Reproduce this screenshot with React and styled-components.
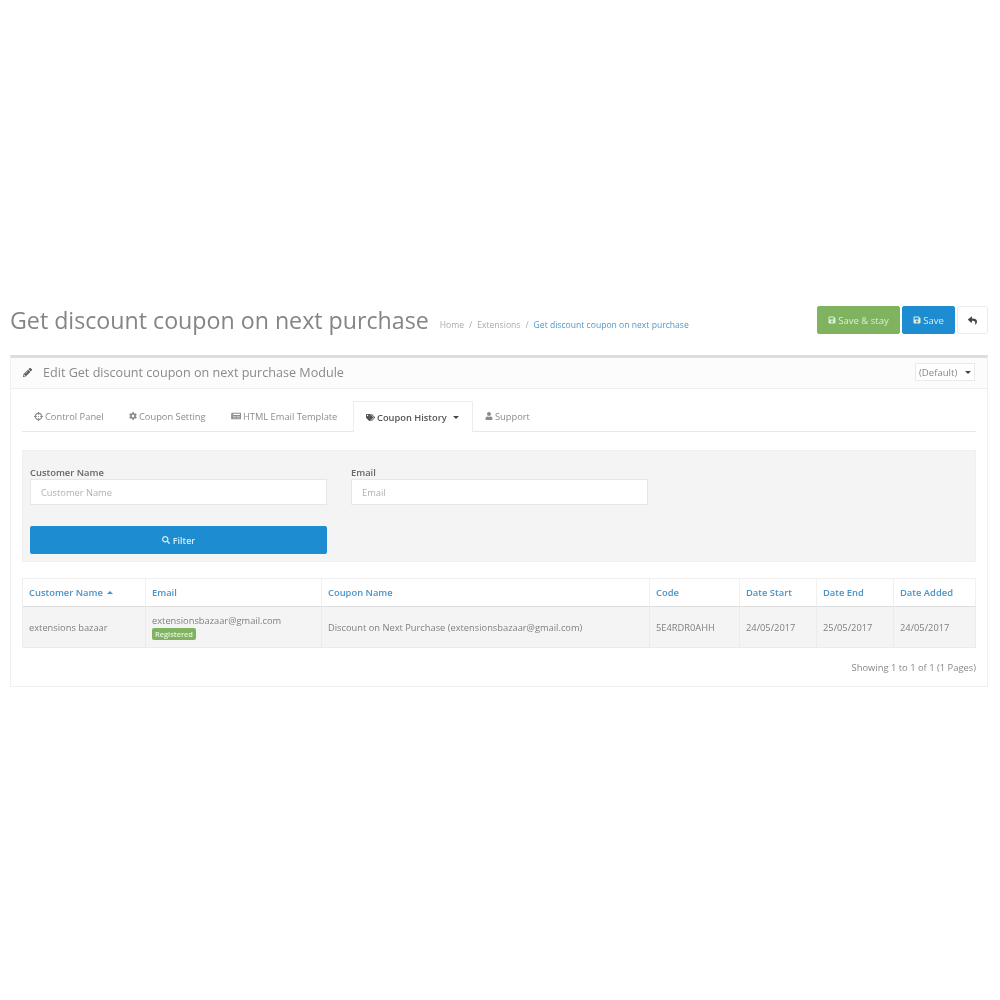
import React from 'react';
import styled, { createGlobalStyle } from 'styled-components';
import {
  FaPencilAlt, FaSave, FaReply, FaCrosshairs, FaCog, FaNewspaper, FaTags, FaUser, FaSearch,
} from 'react-icons/fa';

const GlobalStyle = createGlobalStyle`
  html, body { margin: 0; padding: 0; background: #fff; }
  body { font-family: "Open Sans", "Liberation Sans", sans-serif; color: #666; }
`;

const Page = styled.div`
  width: 1000px;
  height: 1000px;
  box-sizing: border-box;
  padding: 306px 12px 0 10px;
  filter: blur(0.7px);
`;

const Header = styled.div`
  display: flex;
  align-items: center;
  height: 28px;
  margin-bottom: 21px;
`;

const Title = styled.h1`
  margin: 0;
  font-size: 23.2px;
  font-weight: 400;
  line-height: 28px;
  color: #858585;
  white-space: nowrap;
`;

const Crumbs = styled.div`
  display: flex;
  gap: 5px;
  margin: 9px 0 0 11px;
  font-size: 8.6px;
  color: #aaa;
  white-space: nowrap;
`;

const CrumbLink = styled.span`
  color: ${(p) => (p.$current ? '#4a9ad0' : '#aaa')};
`;

const Actions = styled.div`
  display: flex;
  gap: 2px;
  margin-left: auto;
`;

const ActionButton = styled.div`
  display: flex;
  align-items: center;
  justify-content: center;
  gap: 2px;
  box-sizing: border-box;
  width: ${(p) => p.$width}px;
  height: 28px;
  border-radius: 2px;
  font-size: 9.5px;
  color: ${(p) => (p.$bg ? '#dcefd4' : '#444')};
  background: ${(p) => p.$bg || '#fff'};
  border: 1px solid ${(p) => p.$bg || '#ececec'};
`;

const Panel = styled.div`
  box-sizing: border-box;
  height: 332px;
  border: 1px solid #f0f0f0;
  border-top: 3px solid #ddd;
`;

const PanelHeading = styled.div`
  display: flex;
  align-items: center;
  box-sizing: border-box;
  height: 31px;
  padding: 0 12px 2px 12px;
  background: #fcfcfc;
  border-bottom: 1px solid #eee;
  font-size: 12.6px;
  color: #8a8a8a;
`;

const PanelTitle = styled.span`
  margin-left: 11px;
`;

const LangSelect = styled.div`
  display: flex;
  align-items: center;
  justify-content: space-between;
  box-sizing: border-box;
  width: 60px;
  height: 18px;
  margin-left: auto;
  padding: 0 3px 0 3px;
  background: #fff;
  border: 1px solid #eaeaea;
  font-size: 9.6px;
  color: #888;
`;

const Caret = styled.i`
  display: inline-block;
  width: 0;
  height: 0;
  margin-left: 4px;
  border-left: 3px solid transparent;
  border-right: 3px solid transparent;
  border-${(p) => (p.$up ? 'bottom' : 'top')}: 3px solid ${(p) => p.$color || '#444'};
`;

const PanelBody = styled.div`
  padding: 12px 11px 0 11px;
`;

const Tabs = styled.div`
  display: flex;
  height: 30px;
  border-bottom: 1px solid #e8e8e8;
  margin-bottom: 18px;
`;

const Tab = styled.div`
  display: flex;
  align-items: center;
  gap: 2px;
  box-sizing: border-box;
  width: ${(p) => p.$width}px;
  height: ${(p) => (p.$active ? '31px' : '30px')};
  padding-left: 12px;
  font-size: 9.3px;
  font-weight: ${(p) => (p.$active ? 600 : 400)};
  color: ${(p) => (p.$active ? '#555' : '#8c8c8c')};
  background: #fff;
  ${(p) => p.$active && 'border: 1px solid #ececec; border-bottom: none;'}
`;

const Well = styled.div`
  box-sizing: border-box;
  height: 112px;
  padding: 15px 7px 0 7px;
  margin-bottom: 16px;
  background: #f4f4f4;
  border: 1px solid #f0f0f0;
`;

const FilterRow = styled.div`
  display: grid;
  grid-template-columns: 297px 297px;
  column-gap: 24px;
`;

const Label = styled.div`
  font-size: 9.4px;
  font-weight: 600;
  line-height: 13px;
  color: #666;
`;

const Input = styled.div`
  box-sizing: border-box;
  display: flex;
  align-items: center;
  height: 26px;
  padding-left: 10px;
  background: #fff;
  border: 1px solid #e6e6e6;
  font-size: 9.3px;
  color: #b0b0b0;
`;

const FilterButton = styled.div`
  display: flex;
  align-items: center;
  justify-content: center;
  gap: 3px;
  width: 297px;
  height: 28px;
  margin-top: 21px;
  border-radius: 2px;
  background: #1e8cd0;
  font-size: 9px;
  font-weight: 600;
  color: #d6ebf8;
`;

const Table = styled.div`
  display: grid;
  grid-template-columns: 123px 176px 328px 90px 77px 77px 82px;
  border: 1px solid #eee;
  border-width: 0 0 0 1px;
`;

const HeadCell = styled.div`
  display: flex;
  align-items: center;
  box-sizing: border-box;
  height: 29px;
  padding-left: 6px;
  background: #fff;
  border-top: 1px solid #f0f0f0;
  border-right: 1px solid #f0f0f0;
  border-bottom: 1px solid #ddd;
  font-size: 9.4px;
  font-weight: 600;
  color: #4a93c8;
`;

const Cell = styled.div`
  display: flex;
  flex-direction: column;
  justify-content: center;
  align-items: flex-start;
  box-sizing: border-box;
  height: 41px;
  padding-left: 6px;
  background: #f4f4f4;
  border-right: 1px solid #ebebeb;
  border-bottom: 1px solid #ebebeb;
  font-size: 9.3px;
  color: #808080;
  white-space: nowrap;
`;

const Badge = styled.span`
  margin-top: 1px;
  padding: 1px 3px;
  border-radius: 2px;
  background: #7fb35f;
  font-size: 7.4px;
  font-weight: 600;
  color: #e6f2de;
`;

const Pagination = styled.div`
  margin-top: 13px;
  text-align: right;
  font-size: 9.4px;
  color: #888;
`;

const heads = ['Email', 'Coupon Name', 'Code', 'Date Start', 'Date End', 'Date Added'];
const cells = ['Discount on Next Purchase (extensionsbazaar@gmail.com)', '5E4RDR0AHH', '24/05/2017', '25/05/2017', '24/05/2017'];

export default function App() {
  return (
    <Page>
      <GlobalStyle />
      <Header>
        <Title>Get discount coupon on next purchase</Title>
        <Crumbs>
          <CrumbLink>Home</CrumbLink>
          <span>/</span>
          <CrumbLink>Extensions</CrumbLink>
          <span>/</span>
          <CrumbLink $current>Get discount coupon on next purchase</CrumbLink>
        </Crumbs>
        <Actions>
          <ActionButton $width={83} $bg="#7fb35f"><FaSave size={8} />Save &amp; stay</ActionButton>
          <ActionButton $width={53} $bg="#1e8cd0"><FaSave size={8} />Save</ActionButton>
          <ActionButton $width={31}><FaReply size={9} /></ActionButton>
        </Actions>
      </Header>
      <Panel>
        <PanelHeading>
          <FaPencilAlt size={9} color="#555" />
          <PanelTitle>Edit Get discount coupon on next purchase Module</PanelTitle>
          <LangSelect>(Default)<Caret /></LangSelect>
        </PanelHeading>
        <PanelBody>
          <Tabs>
            <Tab $width={95}><FaCrosshairs size={9} />Control Panel</Tab>
            <Tab $width={102}><FaCog size={8} />Coupon Setting</Tab>
            <Tab $width={134}><FaNewspaper size={10} />HTML Email Template</Tab>
            <Tab $width={120} $active><FaTags size={9} />Coupon History<Caret /></Tab>
            <Tab $width={80}><FaUser size={8} />Support</Tab>
          </Tabs>
          <Well>
            <FilterRow>
              <div>
                <Label>Customer Name</Label>
                <Input>Customer Name</Input>
              </div>
              <div>
                <Label>Email</Label>
                <Input>Email</Input>
              </div>
            </FilterRow>
            <FilterButton><FaSearch size={8} />Filter</FilterButton>
          </Well>
          <Table>
            <HeadCell>Customer Name<Caret $up $color="#4a93c8" /></HeadCell>
            {heads.map((h) => <HeadCell key={h}>{h}</HeadCell>)}
            <Cell>extensions bazaar</Cell>
            <Cell>
              extensionsbazaar@gmail.com
              <Badge>Registered</Badge>
            </Cell>
            {cells.map((c, i) => <Cell key={i}>{c}</Cell>)}
          </Table>
          <Pagination>Showing 1 to 1 of 1 (1 Pages)</Pagination>
        </PanelBody>
      </Panel>
    </Page>
  );
}
